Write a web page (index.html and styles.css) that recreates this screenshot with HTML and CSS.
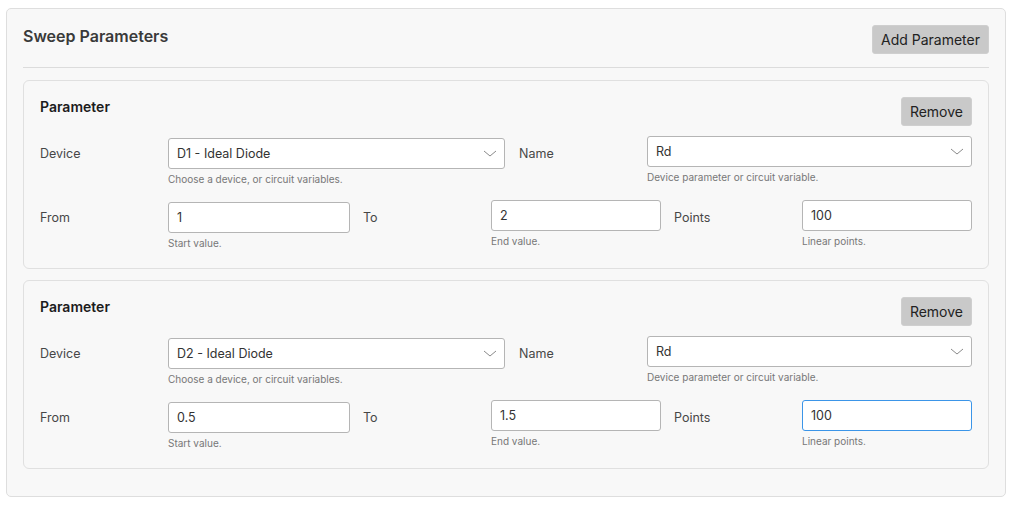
FILE: index.html
```html
<!DOCTYPE html>
<html lang="en">
<head>
    <meta charset="UTF-8">
    <meta name="viewport" content="width=device-width, initial-scale=1.0">
    <title>Sweep Parameters</title>
    <link rel="stylesheet" href="styles.css">
</head>
<body>
    <div class="panel">
        <div class="panel-header">
            <h2>Sweep Parameters</h2>
            <button class="btn">Add Parameter</button>
        </div>
        <hr class="divider">

        <div class="param-card">
            <div class="card-header">
                <h3>Parameter</h3>
                <button class="btn">Remove</button>
            </div>
            <div class="row halves">
                <div class="field">
                    <label>Device</label>
                    <div>
                        <div class="select select-left"><span>D1 - Ideal Diode</span>
                            <svg width="14" height="7" viewBox="0 0 14 7"><path d="M1 1l6 5 6-5" fill="none" stroke="#8a8a8a" stroke-width="1"/></svg>
                        </div>
                        <div class="help">Choose a device, or circuit variables.</div>
                    </div>
                </div>
                <div class="field">
                    <label>Name</label>
                    <div>
                        <div class="select"><span>Rd</span>
                            <svg width="14" height="7" viewBox="0 0 14 7"><path d="M1 1l6 5 6-5" fill="none" stroke="#8a8a8a" stroke-width="1"/></svg>
                        </div>
                        <div class="help">Device parameter or circuit variable.</div>
                    </div>
                </div>
            </div>
            <div class="row thirds">
                <div class="field">
                    <label>From</label>
                    <div class="shift-down">
                        <input type="text" value="1">
                        <div class="help">Start value.</div>
                    </div>
                </div>
                <div class="field">
                    <label>To</label>
                    <div>
                        <input type="text" value="2">
                        <div class="help">End value.</div>
                    </div>
                </div>
                <div class="field">
                    <label>Points</label>
                    <div>
                        <input type="text" value="100">
                        <div class="help">Linear points.</div>
                    </div>
                </div>
            </div>
        </div>

        <div class="param-card">
            <div class="card-header">
                <h3>Parameter</h3>
                <button class="btn">Remove</button>
            </div>
            <div class="row halves">
                <div class="field">
                    <label>Device</label>
                    <div>
                        <div class="select select-left"><span>D2 - Ideal Diode</span>
                            <svg width="14" height="7" viewBox="0 0 14 7"><path d="M1 1l6 5 6-5" fill="none" stroke="#8a8a8a" stroke-width="1"/></svg>
                        </div>
                        <div class="help">Choose a device, or circuit variables.</div>
                    </div>
                </div>
                <div class="field">
                    <label>Name</label>
                    <div>
                        <div class="select"><span>Rd</span>
                            <svg width="14" height="7" viewBox="0 0 14 7"><path d="M1 1l6 5 6-5" fill="none" stroke="#8a8a8a" stroke-width="1"/></svg>
                        </div>
                        <div class="help">Device parameter or circuit variable.</div>
                    </div>
                </div>
            </div>
            <div class="row thirds">
                <div class="field">
                    <label>From</label>
                    <div class="shift-down">
                        <input type="text" value="0.5">
                        <div class="help">Start value.</div>
                    </div>
                </div>
                <div class="field">
                    <label>To</label>
                    <div>
                        <input type="text" value="1.5">
                        <div class="help">End value.</div>
                    </div>
                </div>
                <div class="field">
                    <label>Points</label>
                    <div>
                        <input type="text" class="focused" value="100">
                        <div class="help">Linear points.</div>
                    </div>
                </div>
            </div>
        </div>
    </div>
</body>
</html>
```

FILE: styles.css
```css
body {
    font-family: Inter, "Noto Sans", sans-serif;
    background-color: #fff;
    margin: 0;
    padding: 8px 7px 10px 6px;
    color: #444;
}

.panel {
    background-color: #f8f8f8;
    border: 1px solid #dedede;
    border-radius: 5px;
    padding: 16px 16px 27px 16px;
}

.panel-header {
    display: flex;
    justify-content: space-between;
    align-items: flex-start;
}

h2 {
    margin: 0;
    padding-top: 1px;
    font-size: 16px;
    font-weight: 600;
    color: #3a3a3a;
    line-height: 20px;
}

h3 {
    margin: 0;
    padding-top: 1px;
    font-size: 14px;
    font-weight: 600;
    color: #1c1c1c;
    line-height: 18px;
}

.btn {
    font-family: Inter, "Noto Sans", sans-serif;
    font-size: 14px;
    color: #222;
    background-color: #c9c9c9;
    border: 1px solid #cfcfcf;
    border-radius: 3px;
    height: 29px;
    padding: 0 8px;
}

.divider {
    border: none;
    border-top: 1px solid #dcdcdc;
    margin: 13px 0 12px 0;
}

.param-card {
    border: 1px solid #e0e0e0;
    border-radius: 6px;
    padding: 16px 16px 19px 16px;
    margin-bottom: 11px;
}

.param-card:last-child {
    margin-bottom: 0;
}

.card-header {
    display: flex;
    justify-content: space-between;
    align-items: flex-start;
    margin-bottom: 10px;
}

.row {
    display: grid;
}

.halves {
    grid-template-columns: 465px 1fr;
    column-gap: 14px;
    margin-bottom: 15px;
}

.thirds {
    grid-template-columns: 310px 298px 1fr;
    column-gap: 13px;
}

.field {
    display: grid;
    grid-template-columns: 128px 1fr;
    align-items: start;
}

.field label {
    font-size: 12.5px;
    line-height: 31px;
    padding-top: 2px;
    color: #474747;
}

.select {
    height: 31px;
    box-sizing: border-box;
    background-color: #fff;
    border: 1px solid #b5b5b5;
    border-radius: 3px;
    display: flex;
    align-items: center;
    justify-content: space-between;
    padding: 0 7px 0 8px;
    font-size: 12.5px;
    color: #333;
}

.select-left {
    margin-top: 2px;
}

.shift-down {
    margin-top: 2px;
}

input {
    display: block;
    width: 100%;
    box-sizing: border-box;
    height: 31px;
    padding: 0 8px;
    font-family: Inter, "Noto Sans", sans-serif;
    font-size: 12.5px;
    color: #333;
    background-color: #fff;
    border: 1px solid #b5b5b5;
    border-radius: 3px;
    outline: none;
}

input.focused {
    border-color: #3b95e8;
}

.help {
    font-size: 10px;
    color: #777;
    margin-top: 4px;
    line-height: 12px;
}
```
